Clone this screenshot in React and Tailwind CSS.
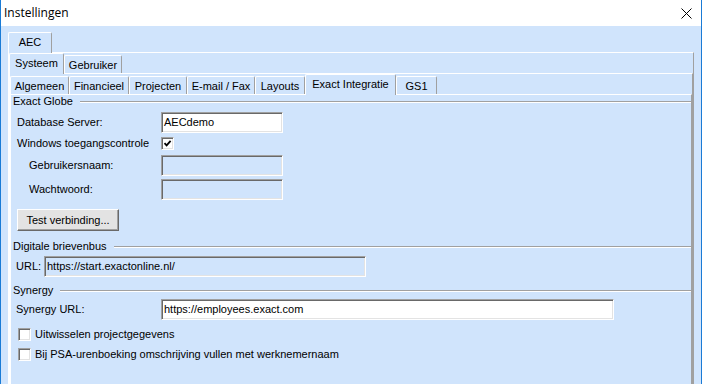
import React from "react";

function Tab({ label, w, selected }) {
  if (selected) {
    return (
      <div
        className={`relative z-10 -mb-px flex h-[21px] ${w} items-center justify-center rounded-t-[2px] border-l border-t border-r border-l-white border-t-white border-r-[#a0a0a0] bg-[#d0e4fc] pb-px`}
      >
        {label}
      </div>
    );
  }
  return (
    <div
      className={`flex h-[18px] ${w} items-center justify-center rounded-t-[2px] border-l border-t border-r border-l-white border-t-white border-r-[#a0a0a0] bg-[#d0e4fc] pt-px`}
    >
      {label}
    </div>
  );
}

function Panel({ className = "", children }) {
  return (
    <div
      className={`flex min-h-0 flex-1 flex-col border-l border-t border-r border-l-white border-t-white border-r-[#a0a0a0] ${className}`}
    >
      {children}
    </div>
  );
}

function Field({ className = "", white, children }) {
  return (
    <div
      className={`flex h-[21px] items-center overflow-hidden whitespace-nowrap border border-t-[#a0a0a0] border-l-[#a0a0a0] border-b-white border-r-white pl-[2px] shadow-[inset_1px_1px_0_#696969,inset_-1px_-1px_0_#e3e3e3] ${
        white ? "bg-white" : "bg-[#d0e4fc]"
      } ${className}`}
    >
      {children}
    </div>
  );
}

function Check({ checked }) {
  return (
    <div className="flex h-[13px] w-[13px] shrink-0 items-center justify-center border border-t-[#a0a0a0] border-l-[#a0a0a0] border-b-white border-r-white bg-white shadow-[inset_1px_1px_0_#696969,inset_-1px_-1px_0_#e3e3e3]">
      {checked && (
        <svg width="9" height="9" viewBox="0 0 9 9">
          <path d="M1.5 4.2 L3.6 6.4 L7.6 1.8" fill="none" stroke="#000" strokeWidth="1.8" />
        </svg>
      )}
    </div>
  );
}

function Group({ title, className = "" }) {
  return (
    <div className={`flex h-[13px] items-center pl-[2px] ${className}`}>
      <span className="leading-[13px]">{title}</span>
      <div className="ml-[7px] h-[2px] flex-1 border-t border-b border-t-[#a0a0a0] border-b-white" />
    </div>
  );
}

export default function App() {
  return (
    <div className="flex h-[384px] w-[702px] flex-col overflow-hidden border-l border-r border-[#1a7bd6] bg-[#d0e4fc] font-['Liberation_Sans',Arial,sans-serif] text-[11px] leading-[13px] text-black">
      {/* title bar */}
      <div className="flex h-[26px] shrink-0 items-center justify-between bg-white pl-[3px] pr-[9px]">
        <span className="font-['Open_Sans',sans-serif] text-[12px] leading-[16px] text-black">
          Instellingen
        </span>
        <svg width="11" height="11" viewBox="0 0 11 11" className="mt-[1px]">
          <path d="M0.5 0.5 L10.5 10.5 M10.5 0.5 L0.5 10.5" stroke="#000" strokeWidth="1" fill="none" />
        </svg>
      </div>

      {/* body */}
      <div className="flex min-h-0 flex-1 flex-col px-[7px] pt-[6px]">
        <div className="flex h-[20px] shrink-0 items-end">
          <Tab label="AEC" w="w-[44px]" selected />
        </div>
        <Panel>
          <div className="flex h-[20px] shrink-0 items-end">
            <Tab label="Systeem" w="w-[55px]" selected />
            <Tab label="Gebruiker" w="w-[58px]" />
          </div>
          <Panel>
            <div className="flex h-[20px] shrink-0 items-end">
              <Tab label="Algemeen" w="w-[59px]" />
              <Tab label="Financieel" w="w-[60px]" />
              <Tab label="Projecten" w="w-[58px]" />
              <Tab label="E-mail / Fax" w="w-[68px]" />
              <Tab label="Layouts" w="w-[50px]" />
              <Tab label="Exact Integratie" w="w-[91px]" selected />
              <Tab label="GS1" w="w-[41px]" />
            </div>
            <Panel>
              <div className="flex flex-col">
                <Group title="Exact Globe" />

                <div className="mt-[4px] flex h-[21px] items-center">
                  <span className="w-[150px] shrink-0 pl-[6px]">Database Server:</span>
                  <Field white className="w-[122px]">AECdemo</Field>
                </div>

                <div className="mt-[4px] flex h-[13px] items-center">
                  <span className="w-[150px] shrink-0 pl-[6px]">Windows toegangscontrole</span>
                  <Check checked />
                </div>

                <div className="mt-[5px] flex h-[21px] items-center">
                  <span className="w-[150px] shrink-0 pl-[18px]">Gebruikersnaam:</span>
                  <Field className="w-[122px]" />
                </div>

                <div className="mt-[3px] flex h-[21px] items-center">
                  <span className="w-[150px] shrink-0 pl-[18px]">Wachtwoord:</span>
                  <Field className="w-[122px]" />
                </div>

                <div className="mt-[9px] flex pl-[6px]">
                  <button className="flex h-[22px] w-[102px] items-center justify-center border border-t-white border-l-white border-b-[#696969] border-r-[#696969] bg-[#e3e3e3] shadow-[inset_-1px_-1px_0_#a0a0a0]">
                    Test verbinding...
                  </button>
                </div>

                <Group title="Digitale brievenbus" className="mt-[9px]" />

                <div className="mt-[3px] flex h-[21px] items-center">
                  <span className="w-[33px] shrink-0 pl-[5px]">URL:</span>
                  <Field className="w-[322px]">https://start.exactonline.nl/</Field>
                </div>

                <Group title="Synergy" className="mt-[7px]" />

                <div className="mt-[2px] flex h-[21px] items-center">
                  <span className="w-[150px] shrink-0 pl-[5px]">Synergy URL:</span>
                  <Field white className="w-[453px]">https://employees.exact.com</Field>
                </div>

                <div className="mt-[8px] flex h-[13px] items-center pl-[7px]">
                  <Check />
                  <span className="ml-[4px]">Uitwisselen projectgegevens</span>
                </div>

                <div className="mt-[7px] flex h-[13px] items-center pl-[7px]">
                  <Check />
                  <span className="ml-[4px]">
                    Bij PSA-urenboeking omschrijving vullen met werknemernaam
                  </span>
                </div>
              </div>
            </Panel>
          </Panel>
        </Panel>
      </div>
    </div>
  );
}
